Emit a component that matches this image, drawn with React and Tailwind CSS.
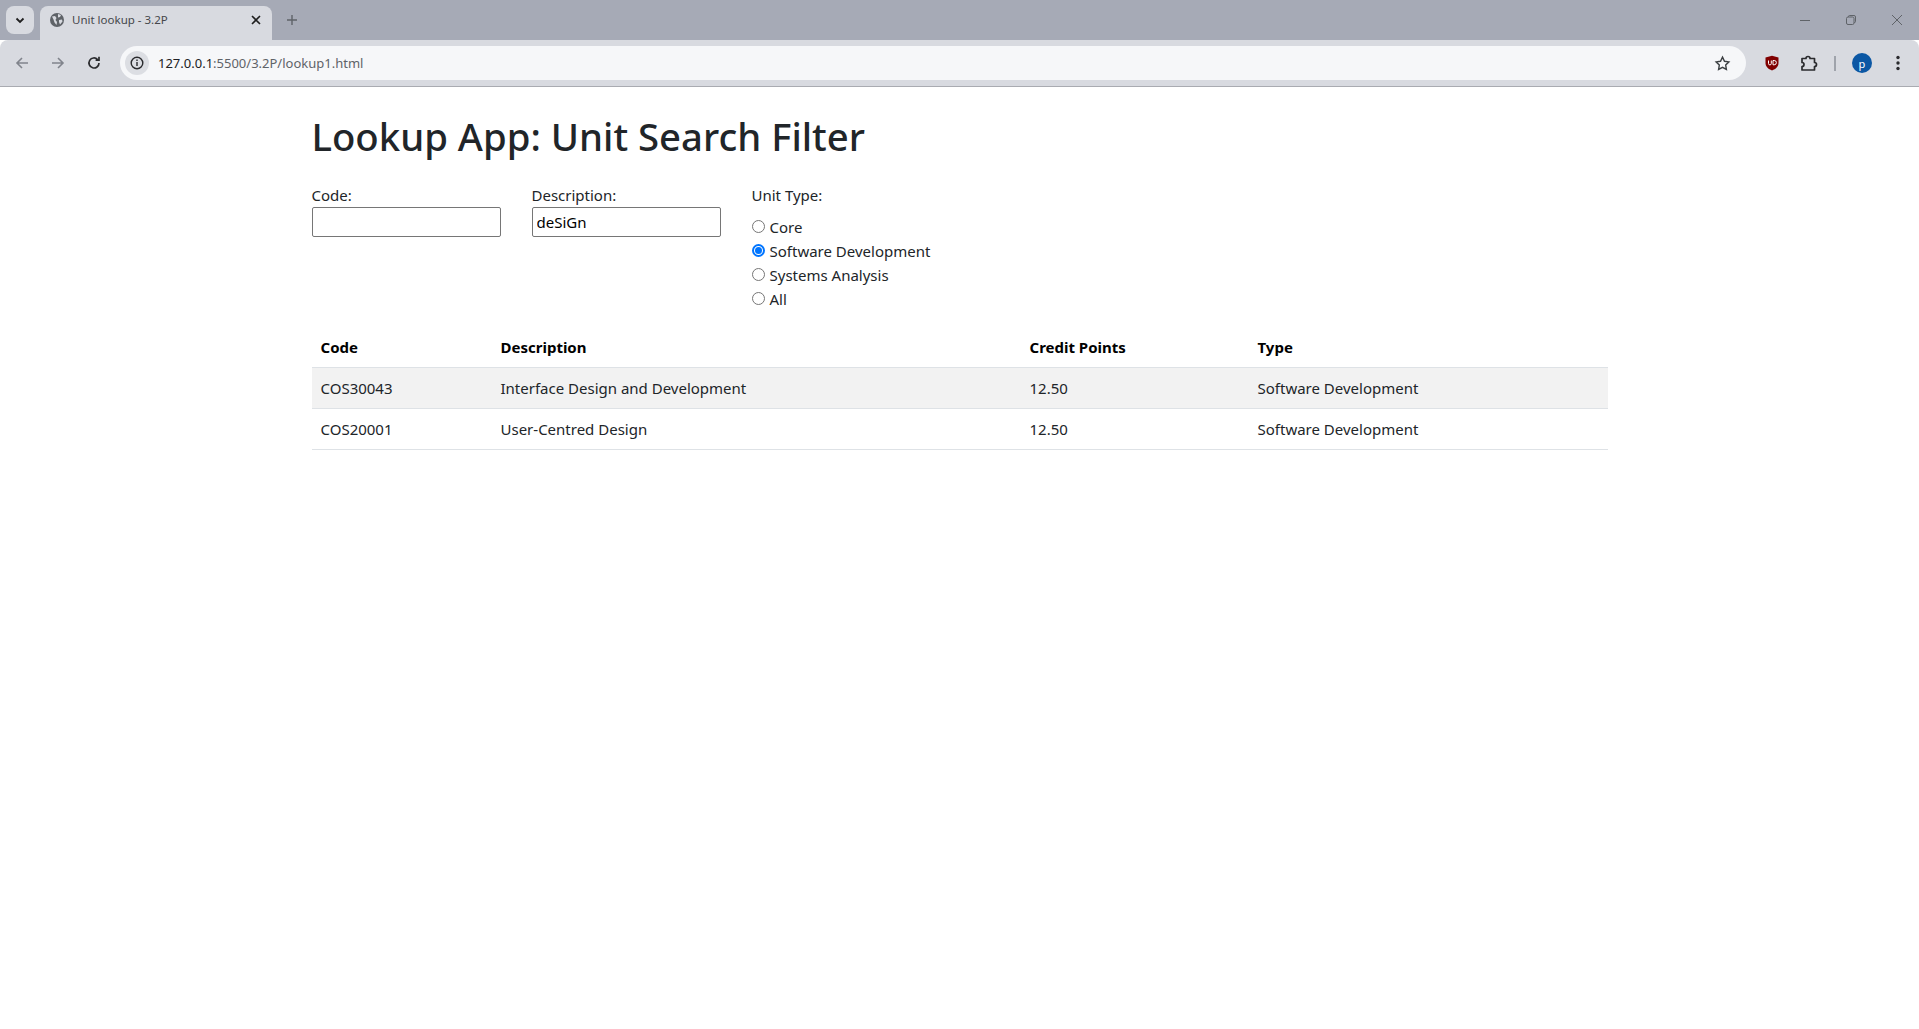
const font = '[font-family:"Noto_Sans",sans-serif]';

function Radio({ label, checked }) {
  return (
    <label className="flex items-center h-6 text-[15px] text-[#212529]">
      <span className={`w-[13px] h-[13px] -mt-[2px] rounded-full border flex items-center justify-center mr-[5px] ${checked ? "border-[#0075ff] border-2" : "border-[#767676]"}`}>
        {checked && <span className="block w-[7px] h-[7px] rounded-full bg-[#0075ff]" />}
      </span>
      {label}
    </label>
  );
}

function Row({ code, desc, shaded }) {
  return (
    <div className={`grid grid-cols-[180px_529px_228px_1fr] h-[41px] items-center border-b border-[#dee2e6] pl-[9px] text-[15px] text-[#212529] ${shaded ? "bg-[#f2f2f2]" : ""}`}>
      <span>{code}</span>
      <span>{desc}</span>
      <span>12.50</span>
      <span>Software Development</span>
    </div>
  );
}

export default function App() {
  return (
    <div className={`h-[1029px] bg-white overflow-hidden ${font}`}>
      {/* tab strip */}
      <div className="h-10 bg-[#a6aab6] flex items-end relative">
        <div className="absolute left-[6px] top-[6px] w-7 h-7 rounded-lg bg-[#d8dae0] flex items-center justify-center">
          <svg width="12" height="12" viewBox="0 0 12 12" fill="none" stroke="#1f1f1f" strokeWidth="1.8"><path d="M2.5 4.5 6 8l3.5-3.5" /></svg>
        </div>
        <div className="ml-[40px] w-[232px] h-[34px] bg-[#d8dae0] rounded-t-lg flex items-center pl-[9px] pr-[10px] pb-[6px] text-xs">
          <svg width="16" height="16" viewBox="0 0 16 16" className="mr-[7px]"><circle cx="8" cy="8" r="7" fill="#5f6368" /><path d="M3 4.5 6 4l1.5 2-1 2 1.5 2-.5 3-2-2.5-1-3zM9 2l3 1-1 2-2 .5zM10 8l3-.5.5 2-2.5 3-1-2.5z" fill="#d8dae0" /></svg>
          <span className="flex-1 text-[#45474c] text-[11.5px]">Unit lookup - 3.2P</span>
          <svg width="12" height="12" viewBox="0 0 12 12" stroke="#1f1f1f" strokeWidth="1.6"><path d="M2 2l8 8M10 2l-8 8" /></svg>
        </div>
        <svg width="12" height="12" viewBox="0 0 12 12" stroke="#5f6368" strokeWidth="1.4" className="ml-[14px] mb-[14px]"><path d="M6 1v10M1 6h10" /></svg>
        <div className="ml-auto flex items-center mb-[14px] mr-[16px] gap-[34px]">
          <svg width="12" height="12" viewBox="0 0 12 12" stroke="#5f6368" strokeWidth="1"><path d="M1 6.5h10" /></svg>
          <svg width="12" height="12" viewBox="0 0 12 12" fill="none" stroke="#5f6368" strokeWidth="1"><rect x="1.5" y="3" width="7.5" height="7.5" rx="1.5" /><path d="M3.5 3V2.5a1 1 0 0 1 1-1H9a1.5 1.5 0 0 1 1.5 1.5v4.5a1 1 0 0 1-1 1H9" /></svg>
          <svg width="12" height="12" viewBox="0 0 12 12" stroke="#5f6368" strokeWidth="1"><path d="M1 1l10 10M11 1L1 11" /></svg>
        </div>
      </div>
      {/* toolbar */}
      <div className="h-[47px] bg-[#d8dae0] rounded-t-lg border-b border-[#a9abb1] flex items-center relative">
        <svg width="16" height="16" viewBox="0 0 16 16" fill="none" stroke="#80848c" strokeWidth="1.6" className="ml-[14px]"><path d="M14 8H3M8 3 3 8l5 5" /></svg>
        <svg width="16" height="16" viewBox="0 0 16 16" fill="none" stroke="#80848c" strokeWidth="1.6" className="ml-[20px]"><path d="M2 8h11M8 3l5 5-5 5" /></svg>
        <svg width="16" height="16" viewBox="0 0 16 16" fill="none" stroke="#2a2b2e" strokeWidth="1.7" className="ml-[20px]"><path d="M13 8a5 5 0 1 1-1.4-3.5M13 1.8v3.4H9.6" /></svg>
        <div className="ml-[18px] w-[1626px] h-[34px] bg-[#f6f7f9] rounded-full flex items-center pl-[5px] relative">
          <div className="w-6 h-6 rounded-full bg-[#dcdee3] flex items-center justify-center">
            <svg width="14" height="14" viewBox="0 0 14 14" fill="none" stroke="#2a2b2e" strokeWidth="1.4"><circle cx="7" cy="7" r="5.8" /><path d="M7 6v4M7 3.5v1.4" /></svg>
          </div>
          <span className="ml-[9px] pt-px text-[13px] text-[#5f6368]"><span className="text-[#202124]">127.0.0.1</span>:5500/3.2P/lookup1.html</span>
          <svg width="17" height="17" viewBox="0 0 24 24" fill="none" stroke="#3c4043" strokeWidth="2" className="ml-auto mr-[15px]"><path d="m12 3 2.8 5.8 6.2.9-4.5 4.4 1 6.3-5.5-3-5.5 3 1-6.3L3 9.7l6.2-.9z" /></svg>
        </div>
        <svg width="14" height="16" viewBox="0 0 14 16" className="ml-[19px]"><path d="M7 .8 13.5 2.6V8c0 3.6-2.7 6-6.5 7.4C3.2 14 .5 11.6.5 8V2.6z" fill="#800000" /><path d="M3.5 5.5v3a1.4 1.4 0 0 0 2.8 0v-3M8 5.5v4.3h1.2a2 2 0 0 0 0-4.3z" fill="none" stroke="#fff" strokeWidth="1" /></svg>
        <svg width="18" height="18" viewBox="0 0 18 18" fill="none" stroke="#2a2b2e" strokeWidth="1.7" className="ml-[21px]"><path d="M2 4.5h4a2 2 0 0 1 4 0h4.5v4a2 2 0 0 1 0 4v3.5H2v-3.5a2 2 0 0 0 0-4z" strokeLinejoin="round" /></svg>
        <div className="w-0.5 h-[15px] bg-[#9fa3ab] ml-[16px]" />
        <div className="ml-[16px] w-5 h-5 rounded-full bg-[#0b57a4] flex items-center justify-center text-white text-[11px] leading-none">p</div>
        <svg width="4" height="16" viewBox="0 0 4 16" fill="#2a2b2e" className="ml-[24px]"><circle cx="2" cy="2.5" r="1.7" /><circle cx="2" cy="8" r="1.7" /><circle cx="2" cy="13.5" r="1.7" /></svg>
      </div>
      {/* page */}
      <main className="w-[1320px] mx-auto px-3">
        <h1 className="mt-[25px] mb-[23px] text-[38.3px] leading-[48px] font-medium text-[#212529]">Lookup App: Unit Search Filter</h1>
        <div className="flex items-start text-[15px] text-[#212529]">
          <div className="w-[220px]">
            <label className="block h-6 leading-6">Code:</label>
            <input readOnly className="block w-[189px] h-[30px] border border-[#767676] rounded-[2px] px-1 text-[15px]" />
          </div>
          <div className="w-[220px]">
            <label className="block h-6 leading-6">Description:</label>
            <input readOnly value="deSiGn" className="block w-[189px] h-[30px] border border-[#767676] rounded-[2px] px-1 text-[15px] text-black" />
          </div>
          <div>
            <label className="block h-6 leading-6 mb-2">Unit Type:</label>
            <Radio label="Core" />
            <Radio label="Software Development" checked />
            <Radio label="Systems Analysis" />
            <Radio label="All" />
          </div>
        </div>
        <div className="mt-[17px]">
          <div className="grid grid-cols-[180px_529px_228px_1fr] h-[40px] items-center border-b border-[#dee2e6] pl-[9px] text-[15px] font-bold text-black">
            <span>Code</span><span>Description</span><span>Credit Points</span><span>Type</span>
          </div>
          <Row code="COS30043" desc="Interface Design and Development" shaded />
          <Row code="COS20001" desc="User-Centred Design" />
        </div>
      </main>
    </div>
  );
}
